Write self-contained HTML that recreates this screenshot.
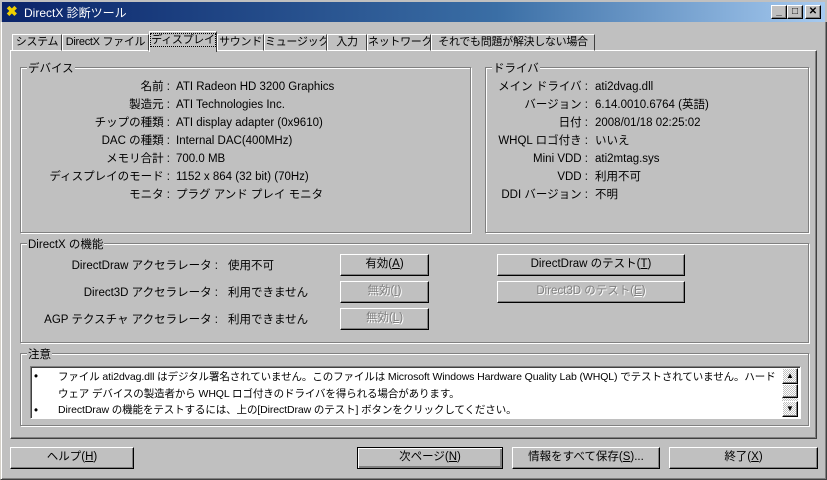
<!DOCTYPE html>
<html><head><meta charset="utf-8"><style>
*{box-sizing:border-box;margin:0;padding:0}
body{width:827px;height:480px;overflow:hidden;background:#c0c0c0;font-family:"Liberation Sans","Noto Sans CJK JP",sans-serif;font-size:11.5px;color:#000;position:relative}
.a{position:absolute;white-space:nowrap}
.title{left:0;top:0;width:827px;height:22px;background:linear-gradient(90deg,#0a246a,#3a6ea5 60%,#a6caf0);border:2px solid #c0c0c0;border-bottom:none}
.tt{left:24px;top:4px;color:#fff;font-size:12px}
.wb{top:5px;width:16px;height:14px;background:#c0c0c0;border:1px solid;border-color:#fff #000 #000 #fff;box-shadow:inset -1px -1px #808080;font-size:10px;text-align:center;line-height:12px;font-weight:bold}
.grp{border:1px solid #808080;box-shadow:1px 1px 0 #fff,inset 1px 1px 0 #fff}
.lg{background:#c0c0c0;padding:0 1px;top:-8px;left:6px;position:absolute}
.tab{top:34px;height:17px;border:1px solid;border-color:#fff #404040 transparent #fff;line-height:14px;font-size:11px;text-align:center;overflow:hidden;letter-spacing:-0.3px}
.btn{height:22px;border:1px solid;border-color:#fff #000 #000 #fff;box-shadow:inset -1px -1px #808080;text-align:center;line-height:19px}
.dis{color:#808080;text-shadow:1px 1px #fff}
.r{text-align:right}
</style></head><body>
<div class="a" style="left:0;top:0;width:827px;height:480px;border:1px solid;border-color:#d4d0c8 #404040 #404040 #d4d0c8;box-shadow:inset 1px 1px #fff,inset -1px -1px #808080"></div>
<div class="a title"></div>
<div class="a" style="left:6px;top:5px;color:#f0d000;font-weight:bold;font-size:14px;line-height:12px">✖</div>
<div class="a tt">DirectX 診断ツール</div>
<div class="a wb" style="left:771px">_</div>
<div class="a wb" style="left:787px">□</div>
<div class="a wb" style="left:805px">✕</div>

<div class="a" style="left:10px;top:50px;width:807px;height:389px;border:1px solid;border-color:#fff #404040 #404040 #fff;box-shadow:inset -1px -1px #808080"></div>
<div class="a tab" style="left:12px;width:50px">システム</div>
<div class="a tab" style="left:62px;width:87px">DirectX ファイル</div>
<div class="a tab" style="left:149px;top:31px;height:21px;width:68px;background:#c0c0c0;border-bottom:none;line-height:17px"><span style="outline:1px dotted #000">ディスプレイ</span></div>
<div class="a tab" style="left:217px;width:47px">サウンド</div>
<div class="a tab" style="left:264px;width:63px">ミュージック</div>
<div class="a tab" style="left:327px;width:40px">入力</div>
<div class="a tab" style="left:367px;width:64px">ネットワーク</div>
<div class="a tab" style="left:431px;width:164px">それでも問題が解決しない場合</div>

<div class="a grp" style="left:20px;top:67px;width:451px;height:166px"><span class="lg">デバイス</span></div>
<div class="a r" style="left:40px;top:78px;width:130px;line-height:18px">名前 :<br>製造元 :<br>チップの種類 :<br>DAC の種類 :<br>メモリ合計 :<br>ディスプレイのモード :<br>モニタ :</div>
<div class="a" style="left:176px;top:78px;line-height:18px">ATI Radeon HD 3200 Graphics<br>ATI Technologies Inc.<br>ATI display adapter (0x9610)<br>Internal DAC(400MHz)<br>700.0 MB<br>1152 x 864 (32 bit) (70Hz)<br>プラグ アンド プレイ モニタ</div>

<div class="a grp" style="left:485px;top:67px;width:324px;height:166px"><span class="lg">ドライバ</span></div>
<div class="a r" style="left:480px;top:78px;width:108px;line-height:18px">メイン ドライバ :<br>バージョン :<br>日付 :<br>WHQL ロゴ付き :<br>Mini VDD :<br>VDD :<br>DDI バージョン :</div>
<div class="a" style="left:595px;top:78px;line-height:18px">ati2dvag.dll<br>6.14.0010.6764 (英語)<br>2008/01/18 02:25:02<br>いいえ<br>ati2mtag.sys<br>利用不可<br>不明</div>

<div class="a grp" style="left:20px;top:243px;width:789px;height:100px"><span class="lg">DirectX の機能</span></div>
<div class="a r" style="left:40px;top:253px;width:178px;line-height:27px">DirectDraw アクセラレータ :<br>Direct3D アクセラレータ :<br>AGP テクスチャ アクセラレータ :</div>
<div class="a" style="left:228px;top:253px;line-height:27px">使用不可<br>利用できません<br>利用できません</div>
<div class="a btn" style="left:340px;top:254px;width:89px">有効(<u>A</u>)</div>
<div class="a btn dis" style="left:340px;top:281px;width:89px">無効(<u>I</u>)</div>
<div class="a btn dis" style="left:340px;top:308px;width:89px">無効(<u>L</u>)</div>
<div class="a btn" style="left:497px;top:254px;width:188px">DirectDraw のテスト(<u>T</u>)</div>
<div class="a btn dis" style="left:497px;top:281px;width:188px">Direct3D のテスト(<u>E</u>)</div>

<div class="a grp" style="left:20px;top:353px;width:789px;height:73px"><span class="lg">注意</span></div>
<div class="a" style="left:30px;top:366px;width:771px;height:53px;background:#fff;border:1px solid;border-color:#808080 #fff #fff #808080;box-shadow:inset 1px 1px #404040"></div>
<div class="a" style="left:34px;top:369px;line-height:17px">•<br><br>•</div>
<div class="a" style="left:58px;top:369px;line-height:16.5px;font-size:10.5px;letter-spacing:-0.1px">ファイル ati2dvag.dll はデジタル署名されていません。このファイルは Microsoft Windows Hardware Quality Lab (WHQL) でテストされていません。ハード<br>ウェア デバイスの製造者から WHQL ロゴ付きのドライバを得られる場合があります。<br>DirectDraw の機能をテストするには、上の[DirectDraw のテスト] ボタンをクリックしてください。</div>
<div class="a" style="left:782px;top:368px;width:16px;height:49px;background:repeating-conic-gradient(#fff 0 25%,#c0c0c0 0 50%) 0 0/2px 2px"></div>
<div class="a btn" style="left:782px;top:368px;width:16px;height:16px;font-size:8px;line-height:13px">▲</div>
<div class="a btn" style="left:782px;top:384px;width:16px;height:14px"></div>
<div class="a btn" style="left:782px;top:401px;width:16px;height:16px;font-size:8px;line-height:13px">▼</div>

<div class="a btn" style="left:10px;top:447px;width:124px">ヘルプ(<u>H</u>)</div>
<div class="a btn" style="left:357px;top:447px;width:146px;border:1px solid #000;box-shadow:inset 1px 1px #fff,inset -2px -2px #808080">次ページ(<u>N</u>)</div>
<div class="a btn" style="left:512px;top:447px;width:148px">情報をすべて保存(<u>S</u>)...</div>
<div class="a btn" style="left:669px;top:447px;width:149px">終了(<u>X</u>)</div>
</body></html>
